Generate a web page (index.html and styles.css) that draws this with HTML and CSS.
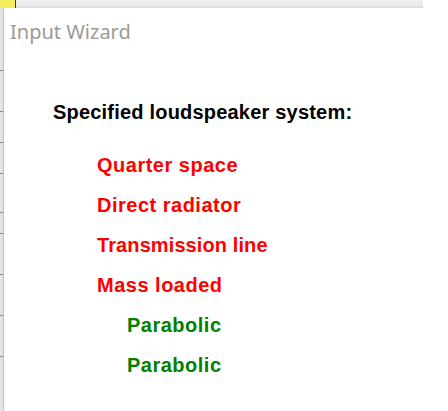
FILE: index.html
```html
<!DOCTYPE html>
<html>
<head>
<meta charset="utf-8">
<link rel="stylesheet" href="styles.css">
</head>
<body>
<div class="screen">
  <div class="topbar">
    <div class="app-icon"></div>
    <div class="topbar-fill"></div>
  </div>
  <div class="main">
    <div class="side-strip">
      <div class="tick t1"></div>
      <div class="tick t2"></div>
      <div class="tick t3"></div>
      <div class="tick t4"></div>
      <div class="tick t5"></div>
      <div class="tick t6"></div>
      <div class="tick t7"></div>
      <div class="tick t8"></div>
      <div class="tick t9"></div>
    </div>
    <div class="window">
      <div class="title">Input Wizard</div>
      <div class="content">
        <div class="heading">Specified loudspeaker system:</div>
        <ul class="items">
          <li class="item red">Quarter space</li>
          <li class="item red">Direct radiator</li>
          <li class="item red tight">Transmission line</li>
          <li class="item red">Mass loaded</li>
          <li class="item green">Parabolic</li>
          <li class="item green">Parabolic</li>
        </ul>
      </div>
    </div>
  </div>
</div>
</body>
</html>
```
FILE: styles.css
```css
html, body {
  margin: 0;
  padding: 0;
  background: #ffffff;
}
.screen {
  width: 448px;
  height: 411px;
  overflow: hidden;
  display: flex;
  flex-direction: column;
}
.topbar {
  height: 8px;
  display: flex;
  width: 423px;
}
.app-icon {
  width: 16px;
  height: 8px;
  background: #f4ee5a;
  border-right: 1px solid #333;
  box-sizing: border-box;
}
.topbar-fill {
  flex: 1;
  background: linear-gradient(#f2f2f2, #e6e6e6);
  border-bottom: 1px solid #d8d8d8;
  box-sizing: border-box;
}
.main {
  flex: 1;
  display: flex;
}
.side-strip {
  width: 4px;
  background: #e4e4e4;
  border-right: 1px solid #bdbdbd;
  box-sizing: border-box;
  display: flex;
  flex-direction: column;
}
.tick {
  height: 1px;
  background: #8a8a8a;
}
.t1 { margin-top: 62px; }
.t2 { margin-top: 40px; }
.t3 { margin-top: 30px; }
.t4 { margin-top: 30px; }
.t5 { margin-top: 38px; }
.t6 { margin-top: 20px; }
.t7 { margin-top: 40px; }
.t8 { margin-top: 40px; }
.t9 { margin-top: 40px; }
.window {
  flex: 1;
  background: #ffffff;
  display: flex;
  flex-direction: column;
}
.title {
  font-family: "Noto Sans", "Open Sans", sans-serif;
  font-size: 20px;
  color: #9c9a98;
  padding-left: 6px;
  padding-top: 11px;
  line-height: 26px;
}
.content {
  padding-left: 49px;
  padding-top: 56px;
}
.heading {
  font-family: "Liberation Sans", Arial, sans-serif;
  font-weight: bold;
  font-size: 20px;
  letter-spacing: 0.2px;
  color: #000;
  line-height: 22px;
}
.items {
  list-style: none;
  margin: 0;
  padding: 0 0 0 44px;
  padding-top: 31px;
}
.item {
  font-family: "Liberation Sans", Arial, sans-serif;
  font-weight: bold;
  font-size: 20px;
  letter-spacing: 0.5px;
  line-height: 22px;
  margin-bottom: 18px;
}
.tight { letter-spacing: 0.1px; }
.red { color: #ff0000; }
.green { color: #008000; padding-left: 30px; }
```
